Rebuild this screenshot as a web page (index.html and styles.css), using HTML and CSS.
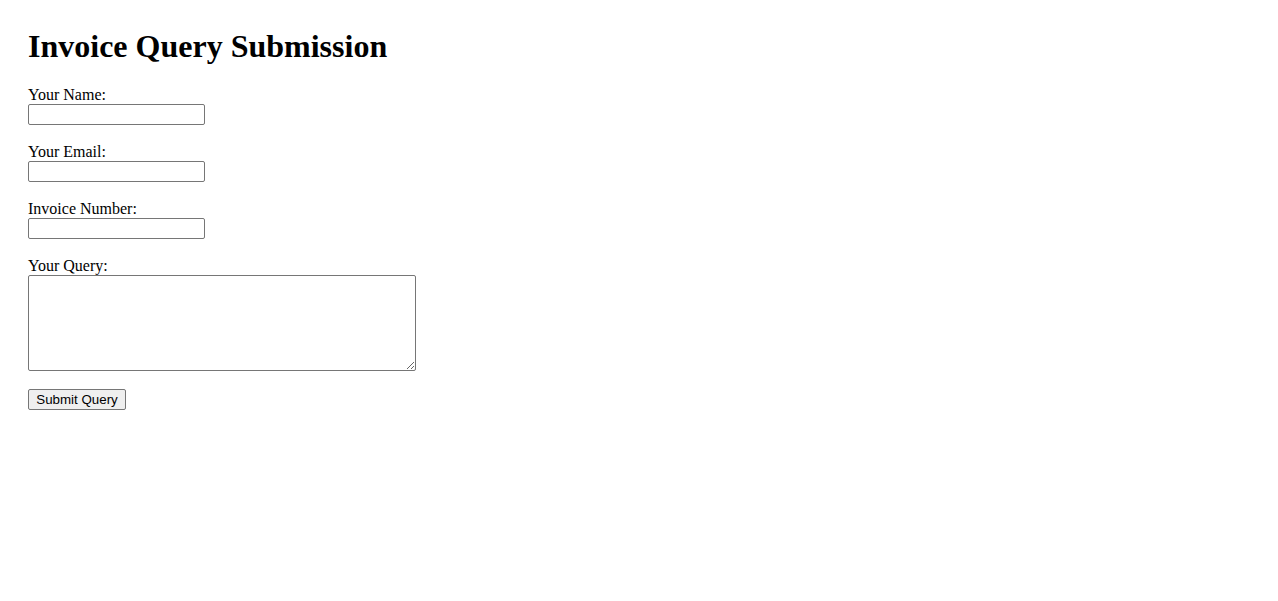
FILE: index.html
```html
<!DOCTYPE html>
<html lang="en">
<head>
<meta charset="utf-8">
<title>Invoice Query Submission</title>
<link rel="stylesheet" href="styles.css">
</head>
<body>
<main class="page">
  <h1 class="title">Invoice Query Submission</h1>
  <form class="form">
    <div class="field">
      <label class="label" for="name">Your Name:</label>
      <input class="input" type="text" id="name">
    </div>
    <div class="field">
      <label class="label" for="email">Your Email:</label>
      <input class="input" type="email" id="email">
    </div>
    <div class="field">
      <label class="label" for="invoice">Invoice Number:</label>
      <input class="input" type="text" id="invoice">
    </div>
    <div class="field">
      <label class="label" for="query">Your Query:</label>
      <textarea class="textarea" id="query"></textarea>
    </div>
    <button class="button" type="button">Submit Query</button>
  </form>
</main>
</body>
</html>
```
FILE: styles.css
```css
html, body {
  margin: 0;
  padding: 0;
  background: #ffffff;
}

.page {
  padding: 28px;
  font-family: "Liberation Serif", "Times New Roman", serif;
  color: #000000;
}

.title {
  margin: 0 0 20px 0;
  font-size: 32px;
  line-height: 37px;
  font-weight: bold;
}

.form {
  display: flex;
  flex-direction: column;
  align-items: flex-start;
}

.field {
  display: flex;
  flex-direction: column;
  align-items: flex-start;
  margin-bottom: 17px;
}

.field:last-of-type {
  margin-bottom: 18px;
}

.label {
  font-size: 16px;
  line-height: 19px;
}

.input {
  box-sizing: border-box;
  width: 177px;
  height: 21px;
  margin: 0;
  padding: 1px 2px;
  border: 1px solid #767676;
  border-radius: 2px;
  background: #ffffff;
  font-family: "Liberation Sans", Arial, sans-serif;
  font-size: 13.33px;
}

.textarea {
  box-sizing: border-box;
  width: 388px;
  height: 96px;
  margin: 0;
  padding: 2px;
  border: 1px solid #767676;
  border-radius: 2px;
  background: #ffffff;
  font-family: "Liberation Mono", monospace;
  font-size: 13.33px;
  display: block;
}

.button {
  box-sizing: border-box;
  width: 98px;
  height: 21px;
  margin: 0;
  padding: 0 6px;
  border: 1px solid #767676;
  border-radius: 2px;
  background: #efefef;
  color: #000000;
  font-family: "Liberation Sans", Arial, sans-serif;
  font-size: 13.33px;
  line-height: 19px;
}
```
